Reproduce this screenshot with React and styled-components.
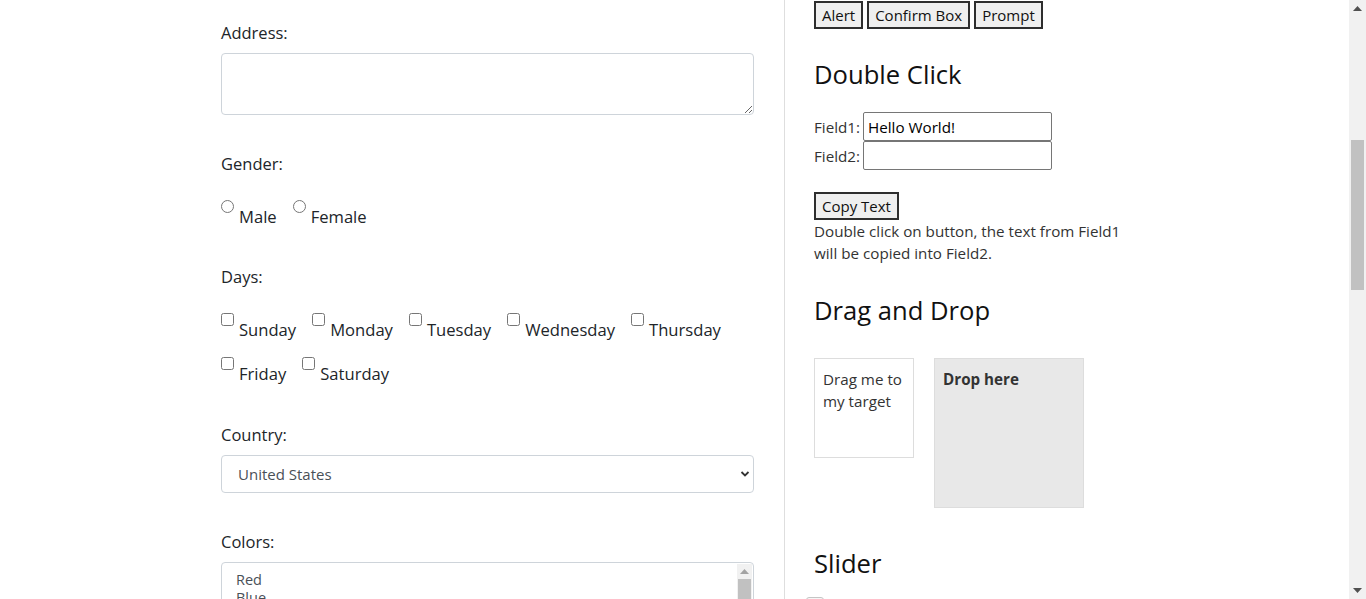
import React from 'react'
import styled, { createGlobalStyle } from 'styled-components'

const GlobalStyle = createGlobalStyle`
  html, body {
    margin: 0;
    padding: 0;
    overflow: hidden;
    background: #fff;
  }
  body {
    font-family: "Open Sans", "Liberation Sans", sans-serif;
  }
`

const Screen = styled.div`
  display: flex;
  height: 599px;
  overflow: hidden;
`

const Page = styled.div`
  flex: 1;
  display: flex;
  min-width: 0;
`

const LeftPane = styled.div`
  width: 533px;
  padding: 21px 30px 0 221px;
  border-right: 1px solid #dedede;
  color: #212529;
  font-size: 16.5px;
  line-height: 24px;
`

const RightPane = styled.div`
  width: 320px;
  padding: 1px 0 0 29px;
  color: #333;
  font-size: 15.2px;
  line-height: 22px;
`

const Group = styled.div`
  margin-bottom: ${(p) => p.mb || 37}px;
`

const Label = styled.div`
  margin-bottom: ${(p) => p.mb || 8}px;
`

const TextArea = styled.textarea`
  display: block;
  box-sizing: border-box;
  width: 100%;
  height: 62px;
  border: 1px solid #ced4da;
  border-radius: 4px;
  font: inherit;
  resize: vertical;
`

const Options = styled.div`
  display: flex;
  flex-wrap: wrap;
  row-gap: 15px;
  font-size: 16.6px;
`

const Option = styled.label`
  display: inline-flex;
  align-items: flex-start;
  margin-right: 16px;
  input {
    margin: 0;
    width: 13px;
    height: 13px;
  }
  span {
    margin: 5px 0 0 5px;
  }
`

const SelectWrap = styled.div`
  position: relative;
`

const Select = styled.select`
  display: block;
  box-sizing: border-box;
  width: 100%;
  height: 38px;
  padding: 0 30px 0 16px;
  border: 1px solid #ced4da;
  border-radius: 4px;
  background: #fff;
  color: #495057;
  font-family: inherit;
  font-size: 15px;
  appearance: none;
`

const Chevron = styled.svg`
  position: absolute;
  right: 4px;
  top: 15px;
  pointer-events: none;
`

const ListBox = styled.div`
  display: flex;
  box-sizing: border-box;
  width: 100%;
  height: 120px;
  border: 1px solid #ced4da;
  border-radius: 4px;
  overflow: hidden;
  color: #495057;
  font-size: 14.5px;
  line-height: 18px;
`

const ListItems = styled.div`
  flex: 1;
  padding: 8px 14px;
`

const ListScroll = styled.div`
  width: 15px;
  margin: 1px 1px 0 0;
  background: #f1f1f1;
  display: flex;
  flex-direction: column;
  align-items: center;
`

const ListThumb = styled.div`
  width: 13px;
  height: 60px;
  margin-top: 1px;
  background: #c1c1c1;
`

const ButtonRow = styled.div`
  display: flex;
  gap: 4px;
`

const Button = styled.button`
  box-sizing: border-box;
  height: 28px;
  padding: 0 6px;
  border: 2px solid #2e2e2e;
  background: #efefef;
  color: #111;
  font-family: inherit;
  font-size: 15px;
  line-height: 22px;
`

const Heading = styled.h2`
  margin: ${(p) => p.mt}px 0 ${(p) => p.mb}px;
  font-size: 25.6px;
  line-height: 29px;
  font-weight: 400;
  color: #111;
`

const FieldRow = styled.div`
  display: flex;
  align-items: center;
  height: 29px;
  gap: 3px;
`

const Input = styled.input`
  box-sizing: border-box;
  width: 189px;
  height: 29px;
  margin: 0;
  padding: 0 4px;
  border: 1px solid #767676;
  border-radius: 2px;
  color: #000;
  font: inherit;
`

const Note = styled.p`
  margin: 0;
`

const CopyButton = styled(Button)`
  margin-top: 22px;
`

const DragArea = styled.div`
  display: flex;
  align-items: flex-start;
  gap: 20px;
`

const Box = styled.div`
  box-sizing: border-box;
  width: ${(p) => p.size}px;
  height: ${(p) => p.size}px;
  padding: 9px 8px;
  border: 1px solid #ddd;
  background: ${(p) => p.bg || '#fff'};
  font-weight: ${(p) => (p.bold ? 700 : 400)};
`

const Slider = styled.div`
  position: relative;
  height: 10px;
  width: 300px;
`

const Handle = styled.span`
  position: absolute;
  left: -8px;
  top: 0;
  width: 18px;
  height: 18px;
  box-sizing: border-box;
  border: 1px solid #c5c5c5;
  border-radius: 3px;
  background: #f6f6f6;
`

const ScrollBar = styled.div`
  width: 17px;
  flex: none;
  background: #f1f1f1;
  display: flex;
  flex-direction: column;
  align-items: center;
`

const Arrow = styled.div`
  height: ${(p) => p.h || 17}px;
  display: flex;
  align-items: center;
  justify-content: center;
`

const Track = styled.div`
  flex: 1;
  width: 100%;
  padding-top: 123px;
  box-sizing: border-box;
`

const Thumb = styled.div`
  width: 13px;
  height: 150px;
  margin: 0 auto;
  background: #c1c1c1;
`

const days = ['Sunday', 'Monday', 'Tuesday', 'Wednesday', 'Thursday', 'Friday', 'Saturday']
const colors = ['Red', 'Blue', 'Green', 'Yellow', 'Red', 'White', 'Green']

const UpArrow = ({ color = '#505050' }) => (
  <svg width="9" height="5" viewBox="0 0 9 5"><path d="M0 5 L4.5 0 L9 5 Z" fill={color} /></svg>
)

function App() {
  return (
    <>
      <GlobalStyle />
      <Screen>
        <Page>
          <LeftPane>
            <Group>
              <Label>Address:</Label>
              <TextArea />
            </Group>

            <Group mb={36}>
              <Label mb={24}>Gender:</Label>
              <Options>
                <Option><input type="radio" name="gender" /><span>Male</span></Option>
                <Option><input type="radio" name="gender" /><span>Female</span></Option>
              </Options>
            </Group>

            <Group>
              <Label mb={24}>Days:</Label>
              <Options>
                {days.map((d) => (
                  <Option key={d}><input type="checkbox" /><span>{d}</span></Option>
                ))}
              </Options>
            </Group>

            <Group>
              <Label>Country:</Label>
              <SelectWrap>
                <Select defaultValue="usa">
                  <option value="usa">United States</option>
                  <option value="canada">Canada</option>
                  <option value="uk">United Kingdom</option>
                </Select>
                <Chevron width="10" height="8" viewBox="0 0 10 8">
                  <path d="M1.5 2 L5 5.5 L8.5 2" fill="none" stroke="#333" strokeWidth="1.8" />
                </Chevron>
              </SelectWrap>
            </Group>

            <Group>
              <Label>Colors:</Label>
              <ListBox>
                <ListItems>
                  {colors.map((c, i) => <div key={i}>{c}</div>)}
                </ListItems>
                <ListScroll>
                  <Arrow h={14}><UpArrow color="#a3a3a3" /></Arrow>
                  <ListThumb />
                </ListScroll>
              </ListBox>
            </Group>
          </LeftPane>

          <RightPane>
            <ButtonRow>
              <Button>Alert</Button>
              <Button>Confirm Box</Button>
              <Button>Prompt</Button>
            </ButtonRow>

            <Heading mt={31} mb={23}>Double Click</Heading>
            <FieldRow>Field1: <Input defaultValue="Hello World!" /></FieldRow>
            <FieldRow>Field2: <Input /></FieldRow>
            <CopyButton>Copy Text</CopyButton>
            <Note>Double click on button, the text from Field1 will be copied into Field2.</Note>

            <Heading mt={32} mb={33}>Drag and Drop</Heading>
            <DragArea>
              <Box size={100}>Drag me to my target</Box>
              <Box size={150} bg="#e8e8e8" bold>Drop here</Box>
            </DragArea>

            <Heading mt={41} mb={19}>Slider</Heading>
            <Slider>
              <Handle />
            </Slider>
          </RightPane>
        </Page>

        <ScrollBar>
          <Arrow>
            <UpArrow />
          </Arrow>
          <Track>
            <Thumb />
          </Track>
          <Arrow>
            <svg width="9" height="5" viewBox="0 0 9 5"><path d="M0 0 L4.5 5 L9 0 Z" fill="#505050" /></svg>
          </Arrow>
        </ScrollBar>
      </Screen>
    </>
  )
}

export default App
